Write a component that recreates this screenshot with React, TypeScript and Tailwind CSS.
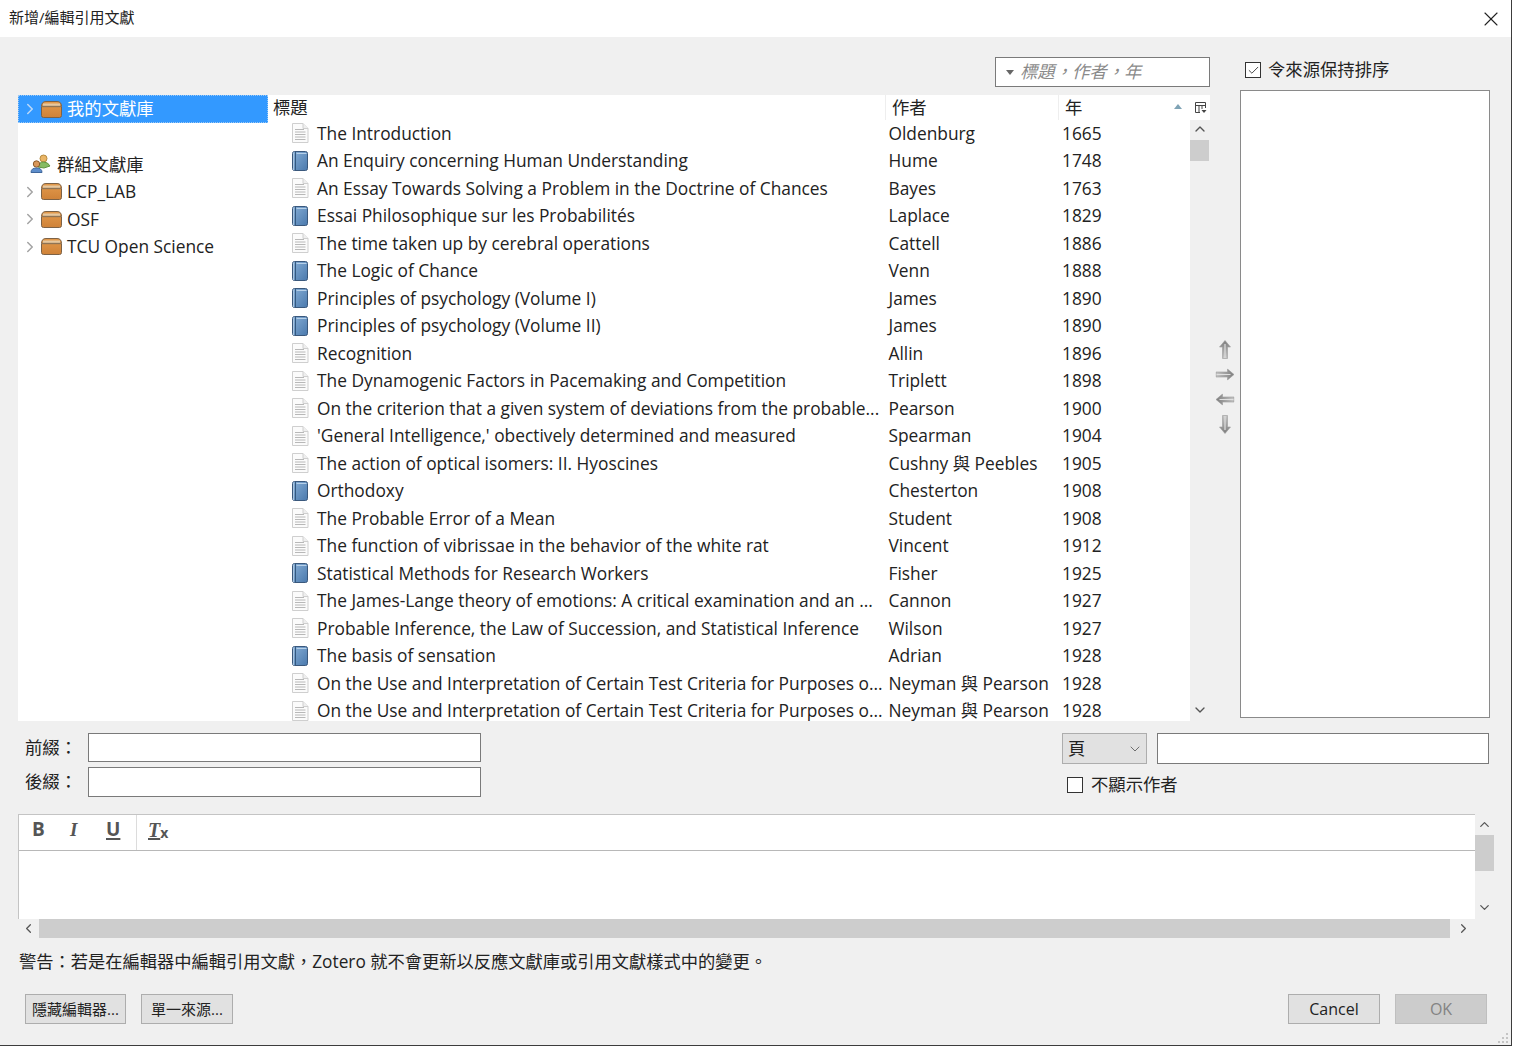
import React from "react";
import { ChevronRight, ChevronLeft, ChevronUp, ChevronDown, X, Check } from "lucide-react";

const rows: [string, string, string, string][] = [
  ["doc", "The Introduction", "Oldenburg", "1665"],
  ["book", "An Enquiry concerning Human Understanding", "Hume", "1748"],
  ["doc", "An Essay Towards Solving a Problem in the Doctrine of Chances", "Bayes", "1763"],
  ["book", "Essai Philosophique sur les Probabilités", "Laplace", "1829"],
  ["doc", "The time taken up by cerebral operations", "Cattell", "1886"],
  ["book", "The Logic of Chance", "Venn", "1888"],
  ["book", "Principles of psychology (Volume I)", "James", "1890"],
  ["book", "Principles of psychology (Volume II)", "James", "1890"],
  ["doc", "Recognition", "Allin", "1896"],
  ["doc", "The Dynamogenic Factors in Pacemaking and Competition", "Triplett", "1898"],
  ["doc", "On the criterion that a given system of deviations from the probable...", "Pearson", "1900"],
  ["doc", "'General Intelligence,' obectively determined and measured", "Spearman", "1904"],
  ["doc", "The action of optical isomers: II. Hyoscines", "Cushny 與 Peebles", "1905"],
  ["book", "Orthodoxy", "Chesterton", "1908"],
  ["doc", "The Probable Error of a Mean", "Student", "1908"],
  ["doc", "The function of vibrissae in the behavior of the white rat", "Vincent", "1912"],
  ["book", "Statistical Methods for Research Workers", "Fisher", "1925"],
  ["doc", "The James-Lange theory of emotions: A critical examination and an ...", "Cannon", "1927"],
  ["doc", "Probable Inference, the Law of Succession, and Statistical Inference", "Wilson", "1927"],
  ["book", "The basis of sensation", "Adrian", "1928"],
  ["doc", "On the Use and Interpretation of Certain Test Criteria for Purposes o...", "Neyman 與 Pearson", "1928"],
  ["doc", "On the Use and Interpretation of Certain Test Criteria for Purposes o...", "Neyman 與 Pearson", "1928"],
];

function DocIcon() {
  return (
    <svg width="18" height="20" viewBox="0 0 18 20" className="shrink-0">
      <path d="M1.5 0.5H12L17 5.5V19.5H1.5Z" fill="#fbfbfb" stroke="#cfcfcf" />
      <path d="M12 0.5V5.5H17" fill="#efefef" stroke="#cfcfcf" />
      <path d="M4 6.5H13M4 9H14.5M4 11.5H14.5M4 14H14.5M4 16.5H14.5" stroke="#b8b8b8" />
    </svg>
  );
}

function BookIcon() {
  return (
    <svg width="18" height="20" viewBox="0 0 18 20" className="shrink-0">
      <defs>
        <linearGradient id="bookFill" x1="0" y1="0" x2="1" y2="1">
          <stop offset="0" stopColor="#86aed6" />
          <stop offset="1" stopColor="#4a79ad" />
        </linearGradient>
      </defs>
      <rect x="1.5" y="0.5" width="15" height="19" rx="2" fill="url(#bookFill)" stroke="#3a587c" />
      <path d="M4.5 1V19" stroke="#34597f" />
      <path d="M2.5 1.5V19" stroke="#a9c5e0" />
      <path d="M5.5 2.5H15.5" stroke="#b7d0e8" />
    </svg>
  );
}

function FolderIcon() {
  return (
    <svg width="21" height="17" viewBox="0 0 21 17" className="shrink-0">
      <defs>
        <linearGradient id="chest" x1="0" y1="0" x2="0" y2="1">
          <stop offset="0" stopColor="#e39a4c" />
          <stop offset="1" stopColor="#cf8238" />
        </linearGradient>
      </defs>
      <path d="M0.5 5.5Q0.5 0.5 5 0.5H16Q20.5 0.5 20.5 5.5V14.5Q20.5 16.5 18.5 16.5H2.5Q0.5 16.5 0.5 14.5Z" fill="url(#chest)" stroke="#7d6246" />
      <path d="M2 2.5H19V5H2Z" fill="#e6c8a0" />
      <path d="M1 5.5H20" stroke="#8f7455" strokeWidth="1.4" />
    </svg>
  );
}

function GroupIcon() {
  return (
    <svg width="21" height="20" viewBox="0 0 21 20" className="shrink-0">
      <circle cx="13.5" cy="4.5" r="3.5" fill="#eab566" stroke="#b58a3f" />
      <path d="M8 13Q9 8 13.5 8Q18 8 20 12L14 14Z" fill="#86bb62" stroke="#5f9440" />
      <circle cx="6.5" cy="10" r="3.2" fill="#d8975a" stroke="#8a5a2b" />
      <path d="M1 18.5Q1 14 6.5 14Q12 14 12 18.5Z" fill="#5d8dcb" stroke="#3f679c" />
    </svg>
  );
}

function MoveArrow({ rotate }: { rotate: string }) {
  return (
    <div className="flex h-[25px] w-[25px] items-center justify-center">
      <svg width="12" height="19" viewBox="0 0 12 19" className={rotate}>
        <defs>
          <linearGradient id="moveFill" x1="0" y1="0" x2="0" y2="1">
            <stop offset="0" stopColor="#7d7d7d" />
            <stop offset="1" stopColor="#c6c6c6" />
          </linearGradient>
        </defs>
        <path d="M6 0.5L11.5 7H8.5V18.5H3.5V7H0.5Z" fill="url(#moveFill)" stroke="#9a9a9a" strokeWidth="0.6" />
        <path d="M6 4V18" stroke="#e0e0e0" strokeWidth="1.2" />
      </svg>
    </div>
  );
}

function LibRow({ label, selected }: { label: string; selected?: boolean }) {
  return (
    <div
      className={
        "flex items-center pl-[3px] " +
        (selected ? "h-[28px] bg-[#3399ff] text-white outline-1 -outline-offset-1 outline-dotted outline-[#9cc9f5]" : "h-[27.5px]")
      }
    >
      <ChevronRight size={18} strokeWidth={2} className={selected ? "text-[#bcd9f8]" : "text-[#a3a3a3]"} />
      <span className="ml-[2px] mr-[5px] flex">
        <FolderIcon />
      </span>
      <span>{label}</span>
    </div>
  );
}

export default function App() {
  return (
    <div
      className="relative h-[1047px] w-[1513px] overflow-hidden bg-white text-[17.33px] leading-none text-[#222]"
      style={{ fontFamily: '"Open Sans", "Noto Sans CJK TC", sans-serif' }}
    >
      <div className="flex h-[1046px] w-[1512px] flex-col border-r border-b border-[#3c3c3c] bg-[#f0f0f0]">
        {/* title bar */}
        <div className="flex h-[37px] shrink-0 items-center justify-between bg-white pl-[9px] pr-[8px] text-[15px]">
          <span className="pb-[3px]">新增/編輯引用文獻</span>
          <X size={24} strokeWidth={1.1} />
        </div>

        {/* picker */}
        <div className="flex pl-[18px] pr-[21px]">
          <div className="flex w-[1192px] flex-col">
            <div className="mt-[20px] flex justify-end">
              <div className="flex h-[30px] w-[215px] items-center border border-[#7a7a7a] bg-white pl-[10px] italic text-[#8a8a8a]">
                <span className="mr-[6px] h-0 w-0 border-x-[4px] border-t-[5px] border-x-transparent border-t-[#666]" />
                標題，作者，年
              </div>
            </div>
            <div className="mt-[8px] flex h-[626px]">
              <div className="w-[250px] shrink-0 bg-white">
                <LibRow label="我的文獻庫" selected />
                <div className="h-[27.5px]" />
                <div className="flex h-[27.5px] items-center pl-[12px]">
                  <GroupIcon />
                  <span className="ml-[6px]">群組文獻庫</span>
                </div>
                <LibRow label="LCP_LAB" />
                <LibRow label="OSF" />
                <LibRow label="TCU Open Science" />
              </div>
              <div className="flex min-w-0 flex-1 flex-col">
                <div className="flex h-[24.5px] shrink-0 bg-white">
                  <div className="w-[617px] pl-[5px] pt-[4px]">標題</div>
                  <div className="w-[173px] border-l border-[#eeeeee] pl-[6px] pt-[4px]">作者</div>
                  <div className="flex w-[132px] justify-between border-l border-[#eeeeee] pl-[6px] pt-[4px]">
                    <span>年</span>
                    <span className="mr-[8px] mt-[5px] h-0 w-0 border-x-[4px] border-b-[5px] border-x-transparent border-b-[#7fa3b5]" />
                  </div>
                  <div className="flex w-[20px] items-center justify-center">
                    <svg width="13" height="13" viewBox="0 0 13 13">
                      <path d="M1.5 1.5H11.5V7M1.5 1.5V11.5H6M1.5 4.5H11.5M5 4.5V11.5M8 4.5V8" fill="none" stroke="#444" />
                      <path d="M7.5 9H12.5L10 12Z" fill="#444" />
                    </svg>
                  </div>
                </div>
                <div className="flex min-h-0 flex-1">
                  <div className="w-[922px] overflow-hidden bg-white">
                    {rows.map((r, i) => (
                      <div key={i} className="flex h-[27.5px] items-center whitespace-nowrap">
                        <div className="flex w-[618px] items-center pl-[23px]">
                          {r[0] === "doc" ? <DocIcon /> : <BookIcon />}
                          <span className="ml-[8px]">{r[1]}</span>
                        </div>
                        <div className="w-[173px] pl-[2.5px]">{r[2]}</div>
                        <div className="pl-[3px]">{r[3]}</div>
                      </div>
                    ))}
                  </div>
                  <div className="flex w-[20px] flex-col items-center pt-[1px] text-[#555]">
                    <ChevronUp size={16} strokeWidth={2} />
                    <div className="mt-[3px] h-[21px] w-[19px] self-start bg-[#cdcdcd]" />
                    <div className="flex-1" />
                    <ChevronDown size={16} strokeWidth={2} className="mb-[3px]" />
                  </div>
                </div>
              </div>
            </div>
          </div>

          {/* move buttons */}
          <div className="flex w-[30px] flex-col items-center pt-[300px]">
            <MoveArrow rotate="" />
            <MoveArrow rotate="rotate-90" />
            <MoveArrow rotate="-rotate-90" />
            <MoveArrow rotate="rotate-180" />
          </div>

          <div className="flex flex-1 flex-col">
            <div className="mb-[7px] mt-[20px] flex h-[26px] items-center pl-[5px]">
              <span className="flex h-[16px] w-[16px] items-center justify-center border border-[#333] bg-white">
                <Check size={13} strokeWidth={1.5} />
              </span>
              <span className="ml-[7px]">令來源保持排序</span>
            </div>
            <div className="h-[628px] border border-[#8a8a8a] bg-white" />
          </div>
        </div>

        {/* prefix / suffix / locator */}
        <div className="mt-[12px] flex justify-between pl-[25px] pr-[22px]">
          <div className="grid grid-cols-[auto_393px] items-center gap-x-[14px] gap-y-[5px]">
            <span className="w-[49px] whitespace-nowrap">前綴：</span>
            <div className="h-[29px] border border-[#7a7a7a] bg-white" />
            <span className="w-[49px] whitespace-nowrap">後綴：</span>
            <div className="h-[30px] border border-[#7a7a7a] bg-white" />
          </div>
          <div className="w-[427px]">
            <div className="flex gap-[10px]">
              <div className="flex h-[31px] w-[85px] items-center justify-between border border-[#adadad] bg-[#e1e1e1] pl-[5px] pr-[3px]">
                <span>頁</span>
                <ChevronDown size={16} strokeWidth={1} className="text-[#333]" />
              </div>
              <div className="h-[31px] flex-1 border border-[#7a7a7a] bg-white" />
            </div>
            <div className="mt-[12px] flex items-center pl-[5px]">
              <span className="h-[16px] w-[16px] border border-[#333] bg-white" />
              <span className="ml-[8px]">不顯示作者</span>
            </div>
          </div>
        </div>

        {/* note editor */}
        <div className="mt-[17px] ml-[18px] flex h-[105px] w-[1476px]">
          <div className="w-[1457px] border-l border-t border-[#c4c4c4] bg-white">
            <div className="flex h-[36px] items-center border-b border-[#b8b8b8] text-[#555]">
              <div className="flex h-full w-[118px] items-center border-r border-[#dcdcdc] pb-[6px] pl-[13px] text-[19px]">
                <span className="w-[37px] font-bold" style={{ fontFamily: '"Open Sans"' }}>B</span>
                <span className="w-[37px] pl-[1px] italic font-bold" style={{ fontFamily: '"Liberation Serif"' }}>I</span>
                <span className="font-bold underline decoration-2 underline-offset-2" style={{ fontFamily: '"Open Sans"' }}>U</span>
              </div>
              <span className="mb-[6px] ml-[11px] text-[20px] italic font-bold underline decoration-2 underline-offset-1" style={{ fontFamily: '"Liberation Serif"' }}>T</span>
              <span className="text-[14px] font-bold">x</span>
            </div>
          </div>
          <div className="flex w-[19px] flex-col items-center bg-[#f0f0f0] pt-[3px] text-[#555]">
            <ChevronUp size={15} strokeWidth={2} />
            <div className="mt-[3px] h-[36px] w-[19px] bg-[#cdcdcd]" />
            <div className="flex-1" />
            <ChevronDown size={15} strokeWidth={2} className="mb-[4px]" />
          </div>
        </div>
        <div className="ml-[18px] flex h-[19px] w-[1457px] items-center text-[#555]">
          <ChevronLeft size={15} strokeWidth={2} className="w-[21px]" />
          <div className="h-[19px] w-[1411px] bg-[#cdcdcd]" />
          <ChevronRight size={15} strokeWidth={2} className="ml-[6px] w-[15px]" />
        </div>

        <div className="mt-[15px] pl-[19px] text-[17.25px]">
          警告：若是在編輯器中編輯引用文獻，Zotero 就不會更新以反應文獻庫或引用文獻樣式中的變更。
        </div>

        {/* buttons */}
        <div className="mt-[24px] flex justify-between pl-[25px] pr-[24px] text-[15px]">
          <div className="flex gap-[15px]">
            <div className="flex h-[30px] w-[101px] items-center justify-center border border-[#adadad] bg-[#e1e1e1]">隱藏編輯器...</div>
            <div className="flex h-[30px] w-[92px] items-center justify-center border border-[#adadad] bg-[#e1e1e1]">單一來源...</div>
          </div>
          <div className="flex gap-[15px]">
            <div className="flex h-[30px] w-[92px] items-center justify-center border border-[#adadad] bg-[#e1e1e1] text-[16px]">Cancel</div>
            <div className="flex h-[30px] w-[92px] items-center justify-center border border-[#bfbfbf] bg-[#cccccc] text-[16px] text-[#838383]">OK</div>
          </div>
        </div>
      </div>
      <svg width="12" height="12" viewBox="0 0 12 12" className="absolute right-[3px] bottom-[3px]">
        <path d="M8 1h2v2H8zM4 5h2v2H4zM8 5h2v2H8zM0 9h2v2H0zM4 9h2v2H4zM8 9h2v2H8z" fill="#c4c4c4" />
      </svg>
    </div>
  );
}
